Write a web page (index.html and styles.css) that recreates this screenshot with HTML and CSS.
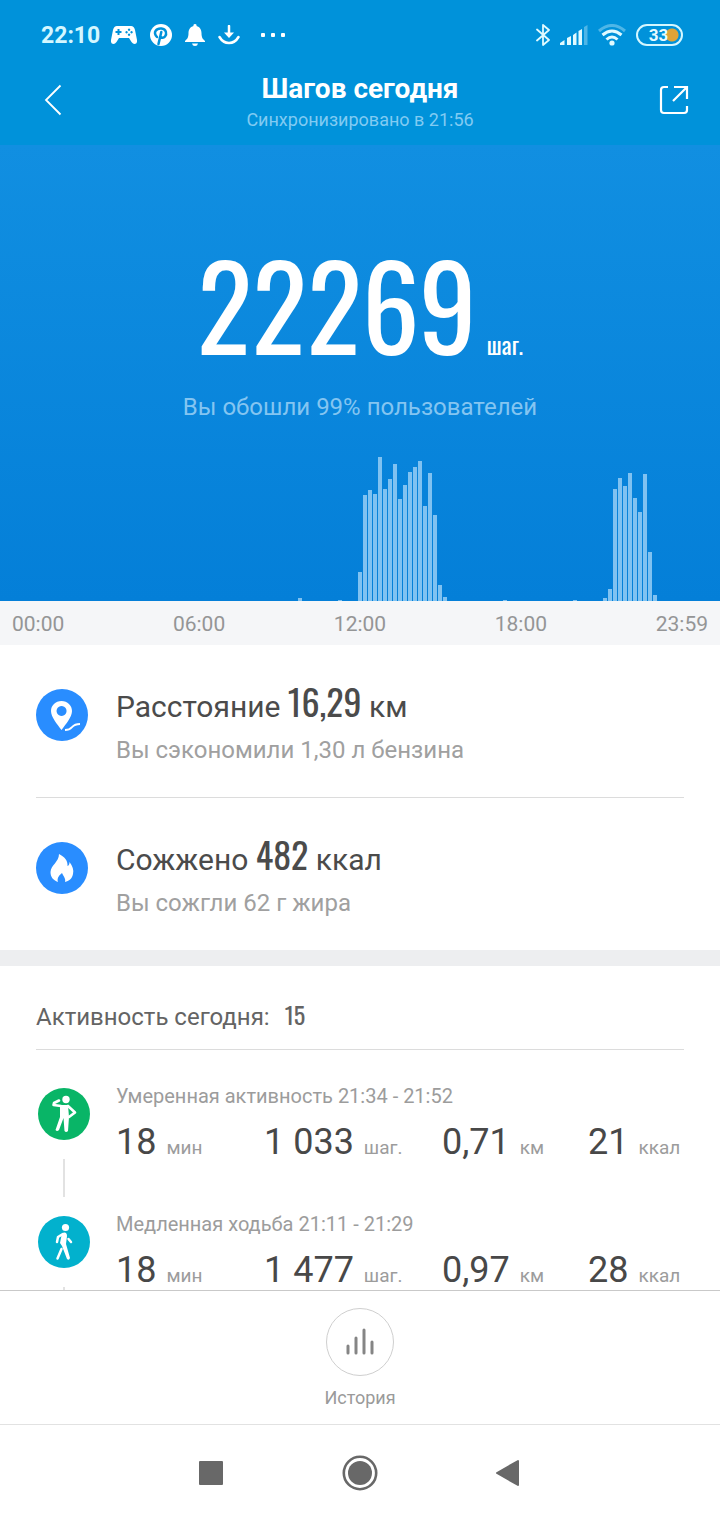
FILE: index.html
```html
<!DOCTYPE html>
<html lang="ru">
<head>
<meta charset="utf-8">
<meta name="viewport" content="width=device-width, initial-scale=1">
<title>Шагов сегодня</title>
<link rel="stylesheet" href="styles.css">
</head>
<body>
<div class="top">
  <div class="status">
    <div class="status-left">
      <time class="clock">22:10</time>
      <svg width="26" height="20" viewBox="0 0 26 20"><path fill="#fff" fill-rule="evenodd" d="M6 1H20Q23 1 24 5L26 15Q26.500 19 23.500 19Q22 19 20.500 17L18 13H8L5.500 17Q4 19 2.500 19Q-.5 19 0 15L2 5Q3 1 6 1ZM6.500 4V6H4.500V8H6.500V10H8.500V8H10.500V6H8.500V4ZM18 3.500a1.200 1.200 0 1 0 .1 0ZM15.500 6a1.200 1.200 0 1 0 .1 0ZM20.500 6a1.200 1.200 0 1 0 .1 0ZM18 8.500a1.200 1.200 0 1 0 .1 0Z"/></svg>
      <svg width="22" height="22" viewBox="0 0 22 22"><circle cx="11" cy="11" r="11" fill="#fff"/><path d="M7 13C2.500 8 6.500 4 11.500 4.500C16.500 5 17 10 15 12.500C13.500 14.500 11 14 10.500 12.500M11.300 8L8.500 20" fill="none" stroke="#0092da" stroke-width="2.500" stroke-linecap="round"/></svg>
      <svg width="20" height="22" viewBox="0 0 20 22"><path fill="#fff" d="M10 0a1.500 1.500 0 0 1 1.500 2C15 3 16.500 6 16.500 9C16.500 14 18 15 20 17V18H0V17C2 15 3.500 14 3.500 9C3.500 6 5 3 8.500 2A1.500 1.500 0 0 1 10 0ZM7 19.500H13Q12.500 22 10 22T7 19.500Z"/></svg>
      <svg width="22" height="20" viewBox="0 0 22 20"><path d="M11 1V9M1.500 12Q5 18 11 18T20.500 12" fill="none" stroke="#fff" stroke-width="2.500" stroke-linecap="round"/><path d="M6 7.500H16L11 13Z" fill="#fff"/></svg>
      <svg class="more" width="24" height="4" viewBox="0 0 24 4" fill="#fff"><rect width="4" height="4" rx="1"/><rect x="10" width="4" height="4" rx="1"/><rect x="20" width="4" height="4" rx="1"/></svg>
    </div>
    <div class="status-right">
      <svg width="14" height="24" viewBox="0 0 14 24"><path d="M1 6.500L13 17L7 22V2L13 7L1 17.500" fill="none" stroke="#e0faff" stroke-width="1.800" stroke-linejoin="round" stroke-linecap="round"/></svg>
      <svg width="28" height="20" viewBox="0 0 28 20" fill="#e0faff"><path d="M0 20V18L4.500 15V20ZM7 13L11 11V20H7ZM13 10L16.500 7.500V20H13ZM18.500 6L22 4V20H18.500Z"/><path opacity=".35" d="M24 2L27.500 0V20H24Z"/></svg>
      <svg width="28" height="22" viewBox="0 0 28 22"><g fill="none" stroke="#e0faff" stroke-width="3"><path opacity=".35" d="M1 7Q14 -4 27 7"/><path d="M4.500 11Q14 3 23.500 11M8.500 15.500Q14 10.500 19.500 15.500"/></g><circle cx="14" cy="19" r="2.600" fill="#e0faff"/></svg>
      <span class="battery">33</span>
    </div>
  </div>
  <header class="header">
    <button class="icon-button" aria-label="Назад"><svg width="18" height="32" viewBox="0 0 18 32"><path d="M16.500 1.500L2 16L16.500 30.500" fill="none" stroke="#fff" stroke-width="1.800"/></svg></button>
    <div class="heading"><h1>Шагов сегодня</h1><p>Синхронизировано в 21:56</p></div>
    <button class="icon-button" aria-label="Поделиться"><svg width="30" height="30" viewBox="0 0 30 30"><path d="M9 2H5Q2 2 2 5V25Q2 28 5 28H25Q28 28 28 25V21M15 2H28V14M28 2L14 16" fill="none" stroke="#fff" stroke-width="2.200"/></svg></button>
  </header>
</div>
<section class="hero">
  <p class="total"><strong>22269</strong><span>шаг.</span></p>
  <p class="rank">Вы обошли 99% пользователей</p>
  <div class="chart" id="chart" role="img" aria-label="Шаги за день"></div>
</section>
<div class="axis"><span>00:00</span><span>06:00</span><span>12:00</span><span>18:00</span><span>23:59</span></div>
<main class="content">
  <section class="stats">
    <article class="stat">
      <svg class="badge" viewBox="0 0 52 52"><circle cx="26" cy="26" r="26" fill="#298dff"/><path fill="#fff" fill-rule="evenodd" d="M25.500 12C31.500 12 36 16.500 36 22C36 28 30 35 25.500 41C21 35 15 28 15 22C15 16.500 19.500 12 25.500 12ZM25.500 17a5 5 0 1 0 .1 0Z"/><path d="M29 41C38 41 34 35 44 35" fill="none" stroke="#fff" stroke-width="1.800"/></svg>
      <div><h2>Расстояние <b>16,29</b> км</h2><p>Вы сэкономили 1,30 л бензина</p></div>
    </article>
    <article class="stat">
      <svg class="badge" viewBox="0 0 52 52"><circle cx="26" cy="26" r="26" fill="#298dff"/><path fill="#fff" d="M23 12C29 15 32 19 31.500 24C33 23.500 33.500 22 33.500 20C36.500 24 38 28 37 32C36 37 33 39 29 40C30 37 28 35 26 31C22 34 21 37 22 40C17 38 14.500 35 14.500 30C15 23 23 20 23 12Z"/></svg>
      <div><h2>Сожжено <b>482</b> ккал</h2><p>Вы сожгли 62 г жира</p></div>
    </article>
  </section>
  <section class="activity">
    <h2 class="activity-title">Активность сегодня: <b>15</b></h2>
    <article class="entry">
      <div class="rail"><svg class="badge" viewBox="0 0 52 52"><circle cx="26" cy="26" r="26" fill="#09b567"/><circle cx="28" cy="11.500" r="3.700" fill="#fff"/><path d="M22 17H30L31 29L30 43Q28 45 26.500 43L25.500 30L21 42Q19 44 17.500 42L22 29Z" fill="#fff"/><path d="M23 18L15.500 17L16 15L21 12.500M30 18L37 24.500L31 29" fill="none" stroke="#fff" stroke-width="2.600" stroke-linecap="round" stroke-linejoin="round"/></svg><i class="link"></i></div>
      <div class="entry-body"><h3>Умеренная активность 21:34 - 21:52</h3>
        <div class="values"><span><b>18</b>мин</span><span><b>1 033</b>шаг.</span><span><b>0,71</b>км</span><span><b>21</b>ккал</span></div></div>
    </article>
    <article class="entry">
      <div class="rail"><svg class="badge" viewBox="0 0 52 52"><circle cx="26" cy="26" r="26" fill="#02b1cd"/><circle cx="27.500" cy="11.500" r="3.600" fill="#fff"/><path d="M24 17Q29 15 29 20L28 28L32 42Q31 45 29 43L24 30L22 27Z" fill="#fff"/><path d="M24 18.500L20 21L19 26M30.500 23L33 26M23.500 33L19.500 42.500" fill="none" stroke="#fff" stroke-width="2.500" stroke-linecap="round" stroke-linejoin="round"/></svg><i class="link"></i></div>
      <div class="entry-body"><h3>Медленная ходьба 21:11 - 21:29</h3>
        <div class="values"><span><b>18</b>мин</span><span><b>1 477</b>шаг.</span><span><b>0,97</b>км</span><span><b>28</b>ккал</span></div></div>
    </article>
  </section>
</main>
<footer class="history">
  <button><span class="ring"><svg width="28" height="28" viewBox="0 0 28 28"><path d="M2 18V25M10 10V25M18 2V25M26 14V25" stroke="#858585" stroke-width="3" stroke-linecap="round"/></svg></span>История</button>
</footer>
<nav class="system">
  <button aria-label="Недавние"><svg width="36" height="36" viewBox="0 0 36 36"><rect x="6" y="6" width="24" height="24" rx="1" fill="#686868"/></svg></button>
  <button aria-label="Домой"><svg width="36" height="36" viewBox="0 0 36 36"><circle cx="18" cy="18" r="16.200" fill="none" stroke="#686868" stroke-width="2.600"/><circle cx="18" cy="18" r="12" fill="#686868"/></svg></button>
  <button aria-label="Назад"><svg width="36" height="36" viewBox="0 0 36 36"><path d="M27 6V30L6 18Z" fill="#686868" stroke="#686868" stroke-width="2" stroke-linejoin="round"/></svg></button>
</nav>
<script src="chart.js"></script>
</body>
</html>
```

FILE: styles.css
```css
* { box-sizing: border-box; }
body {
  margin: 0;
  height: 100vh;
  display: flex;
  flex-direction: column;
  font-family: Roboto, "Noto Sans", sans-serif;
  color: #4b4b4b;
  background: #fff;
}
h1, h2, h3, p { margin: 0; font-weight: 400; }
svg { display: block; flex: none; }
button {
  border: 0;
  padding: 0;
  background: none;
  color: inherit;
  font: inherit;
  cursor: pointer;
}
.top { flex: none; background: #0092da; color: #fff; }
.status {
  height: 70px;
  display: flex;
  align-items: center;
  justify-content: space-between;
  padding: 0 37px 0 41px;
}
.status-left { display: flex; align-items: center; gap: 13px; }
.status-right { display: flex; align-items: center; gap: 10px; }
.clock { font-size: 23px; font-weight: 700; color: #d4f7ff; margin-right: -2px; }
.more { margin-left: 8px; }
.battery {
  width: 47px;
  height: 22px;
  border: 2px solid #d4f7ff;
  border-radius: 11px;
  padding-right: 2px;
  background: radial-gradient(circle at 34px 9px, #dfa337 6px, transparent 7px);
  color: #e8fbff;
  font-size: 17px;
  font-weight: 700;
  line-height: 18px;
  text-align: center;
}
.header {
  height: 75px;
  display: grid;
  grid-template-columns: 1fr auto 1fr;
  align-items: start;
  padding: 0 26px;
}
.icon-button {
  width: 40px;
  height: 60px;
  display: grid;
  place-items: center;
  margin-left: 7px;
}
.icon-button:last-child { justify-self: end; }
.heading { text-align: center; }
.heading h1 { font-size: 28px; font-weight: 700; line-height: 38px; }
.heading p { font-size: 18px; line-height: 24px; color: #81cbf2; }
.hero {
  flex: none;
  display: flex;
  flex-direction: column;
  align-items: center;
  padding-top: 86px;
  background: linear-gradient(#118fe1, #047fd8);
}
.total {
  display: flex;
  align-items: baseline;
  gap: 10px;
  font-family: Oswald, "Liberation Sans Narrow", "Liberation Sans", sans-serif;
  color: #fff;
}
.total strong { font-size: 115px; font-weight: 400; line-height: 144px; }
.total span { font-size: 24px; }
.rank { font-size: 24px; line-height: 32px; margin-top: 16px; color: #84c5f1; }
.chart {
  align-self: stretch;
  height: 144px;
  margin-top: 34px;
  display: flex;
  align-items: flex-end;
  padding: 0 2px 0 3px;
}
.bar { flex: 1; margin-right: 1px; background: #80c2f1; }
.axis {
  flex: none;
  height: 44px;
  display: flex;
  justify-content: space-between;
  align-items: center;
  padding: 2px 12px 0;
  background: #f5f6f8;
  color: #949596;
  font-size: 21px;
}
.content { flex: 1; min-height: 0; overflow: hidden; }
.stats { padding: 0 36px; border-bottom: 16px solid #edeef0; }
.stat {
  display: flex;
  gap: 28px;
  height: 153px;
  padding-top: 44px;
  border-bottom: 1px solid #dcdcdc;
}
.stat:last-child { height: 152px; border-bottom: 0; }
.badge { width: 52px; height: 52px; flex: none; }
.stat h2 { font-size: 30px; line-height: 40px; margin-top: -8px; white-space: nowrap; }
.stat h2 b {
  font-family: Oswald, "Liberation Sans Narrow", "Liberation Sans", sans-serif;
  font-size: 36px;
  font-weight: 400;
  line-height: 40px;
}
.stat p { font-size: 24px; line-height: 32px; margin-top: 7px; color: #a0a0a0; }
.activity { padding: 0 36px; }
.activity-title {
  height: 84px;
  display: flex;
  align-items: baseline;
  gap: 15px;
  padding-top: 30px;
  border-bottom: 1px solid #dcdcdc;
  font-size: 24px;
  color: #646464;
}
.activity-title b {
  font-family: Oswald, "Liberation Sans Narrow", "Liberation Sans", sans-serif;
  font-size: 24px;
  font-weight: 400;
}
.entry { display: flex; gap: 26px; height: 128px; padding-left: 2px; }
.activity-title + .entry { margin-top: 38px; }
.rail { display: flex; flex-direction: column; align-items: center; }
.link { width: 2px; height: 38px; margin-top: 19px; background: #e2e2e2; }
.entry-body { flex: 1; }
.entry h3 { font-size: 20px; line-height: 24px; margin-top: -4px; color: #9c9c9c; }
.values {
  display: grid;
  grid-template-columns: 148fr 178fr 146fr 96fr;
  margin-top: 12px;
  font-size: 19px;
  line-height: 44px;
  color: #9c9c9c;
  white-space: nowrap;
}
.values b { font-size: 36px; font-weight: 400; color: #484848; margin-right: 10px; }
.history {
  flex: none;
  height: 134px;
  border-top: 1px solid #c9c9c9;
  display: flex;
  justify-content: center;
  align-items: flex-start;
  padding-top: 17px;
}
.history button {
  display: flex;
  flex-direction: column;
  align-items: center;
  gap: 10px;
  font-size: 18px;
  line-height: 24px;
  color: #9a9a9a;
}
.ring {
  width: 68px;
  height: 68px;
  border: 1px solid #cfcfcf;
  border-radius: 50%;
  display: grid;
  place-items: center;
}
.system {
  flex: none;
  height: 96px;
  border-top: 1px solid #e2e2e2;
  display: flex;
  justify-content: center;
  align-items: center;
  gap: 113px;
}
```

FILE: chart.js
```js
// Ten-minute slots: [first slot, bar heights in pixels]
const runs = [
  [59, [3]],
  [67, [1]],
  [71, [29, 106, 111, 107, 144, 112, 122, 137, 102, 116, 129, 134, 140, 95, 128, 86, 16, 4]],
  [100, [1]],
  [114, [1]],
  [120, [3, 12, 112, 123, 115, 128, 103, 89, 127, 49, 6]]
];
const heights = new Array(143).fill(0);
for (const [start, values] of runs) {
  values.forEach((value, i) => { heights[start + i] = value; });
}
const chart = document.getElementById("chart");
for (const height of heights) {
  const bar = document.createElement("span");
  bar.className = "bar";
  bar.style.height = height + "px";
  chart.append(bar);
}
```
